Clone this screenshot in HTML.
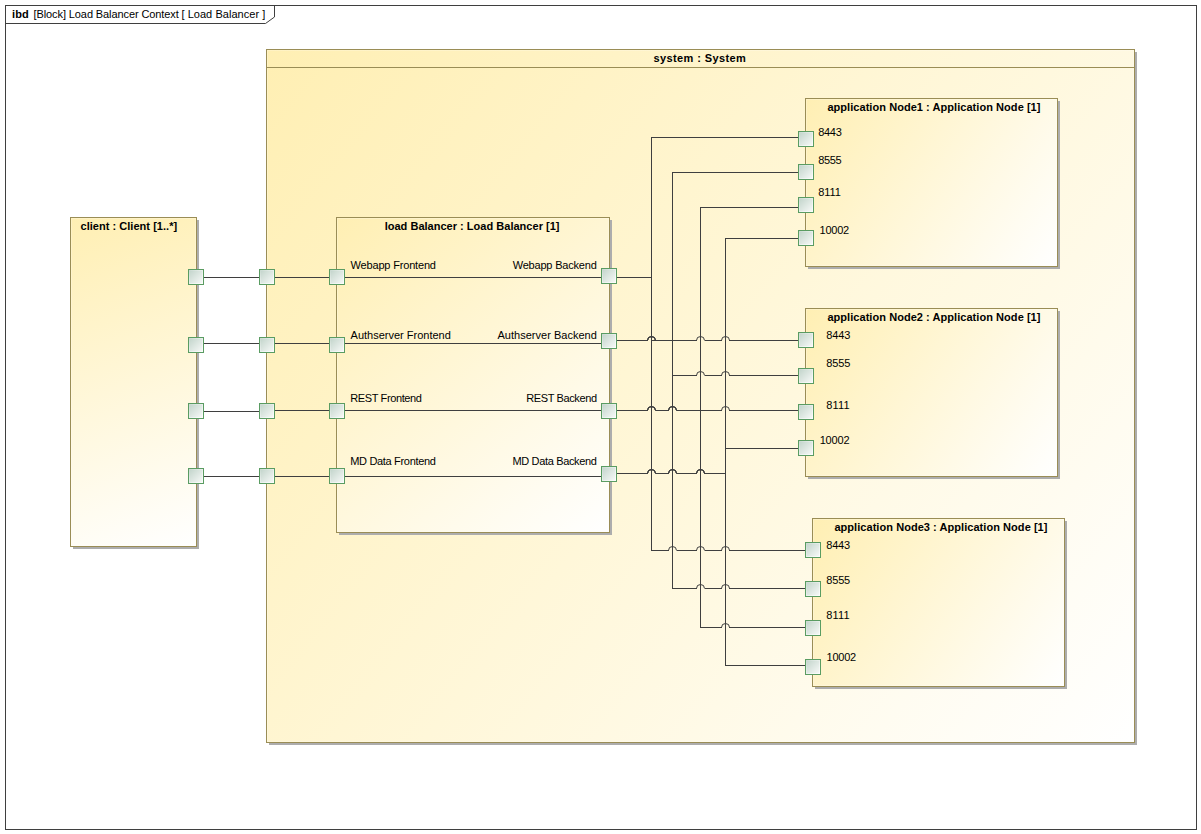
<!DOCTYPE html>
<html><head><meta charset="utf-8"><title>ibd Load Balancer Context</title>
<style>
html,body{margin:0;padding:0;background:#fff;}
body{width:1201px;height:834px;overflow:hidden;}
svg{display:block;font-family:"Liberation Sans",sans-serif;font-size:11px;fill:#000;}
svg rect, svg path{shape-rendering:crispEdges;}
svg path.aa{shape-rendering:auto;}
</style></head><body>
<svg width="1201" height="834" viewBox="0 0 1201 834">
<defs>
<linearGradient id="gph" x1="0" y1="0" x2="1" y2="1"><stop offset="0" stop-color="#fff" stop-opacity="0.12"/><stop offset="1" stop-color="#fff" stop-opacity="0.6"/></linearGradient>
<linearGradient id="gp" x1="0" y1="0" x2="1" y2="1"><stop offset="0" stop-color="#bfd2c8"/><stop offset="1" stop-color="#fbfcfb"/></linearGradient>
<linearGradient id="gc" gradientUnits="userSpaceOnUse" x1="70" y1="217" x2="196" y2="546"><stop offset="0" stop-color="#ffefb3"/><stop offset="1" stop-color="#ffffff"/></linearGradient>
<linearGradient id="gs" gradientUnits="userSpaceOnUse" x1="266" y1="49" x2="1134" y2="742"><stop offset="0" stop-color="#ffefb3"/><stop offset="1" stop-color="#ffffff"/></linearGradient>
<linearGradient id="gl" gradientUnits="userSpaceOnUse" x1="336" y1="217" x2="609" y2="532"><stop offset="0" stop-color="#ffefb3"/><stop offset="1" stop-color="#ffffff"/></linearGradient>
<linearGradient id="gn1" gradientUnits="userSpaceOnUse" x1="805" y1="98" x2="1057" y2="266"><stop offset="0" stop-color="#ffefb3"/><stop offset="1" stop-color="#ffffff"/></linearGradient>
<linearGradient id="gn2" gradientUnits="userSpaceOnUse" x1="805" y1="308" x2="1057" y2="476"><stop offset="0" stop-color="#ffefb3"/><stop offset="1" stop-color="#ffffff"/></linearGradient>
<linearGradient id="gn3" gradientUnits="userSpaceOnUse" x1="812" y1="518" x2="1064" y2="686"><stop offset="0" stop-color="#ffefb3"/><stop offset="1" stop-color="#ffffff"/></linearGradient>
</defs>
<rect x="5.5" y="5.5" width="1191" height="824" fill="#ffffff" stroke="#3f3f3f"/>
<path d="M5.5 23.5 H265.5 L274.5 17 V5.5" fill="none" stroke="#3f3f3f" class="aa"/>
<rect x="73" y="220" width="126" height="329" fill="#adadad"/>
<rect x="70.5" y="217.5" width="126" height="329" fill="url(#gc)" stroke="#9a8d56"/>
<rect x="71.5" y="218.5" width="124" height="327" fill="none" stroke="#ffffff" stroke-opacity="0.22"/>
<rect x="269" y="52" width="868" height="693" fill="#adadad"/>
<rect x="266.5" y="49.5" width="868" height="693" fill="url(#gs)" stroke="#9a8d56"/>
<rect x="267.5" y="50.5" width="866" height="691" fill="none" stroke="#ffffff" stroke-opacity="0.22"/>
<rect x="266" y="67" width="868" height="1" fill="#9a8d56"/>
<rect x="339" y="220" width="273" height="315" fill="#adadad"/>
<rect x="336.5" y="217.5" width="273" height="315" fill="url(#gl)" stroke="#9a8d56"/>
<rect x="337.5" y="218.5" width="271" height="313" fill="none" stroke="#ffffff" stroke-opacity="0.22"/>
<rect x="808" y="101" width="252" height="168" fill="#adadad"/>
<rect x="805.5" y="98.5" width="252" height="168" fill="url(#gn1)" stroke="#9a8d56"/>
<rect x="806.5" y="99.5" width="250" height="166" fill="none" stroke="#ffffff" stroke-opacity="0.22"/>
<rect x="808" y="311" width="252" height="168" fill="#adadad"/>
<rect x="805.5" y="308.5" width="252" height="168" fill="url(#gn2)" stroke="#9a8d56"/>
<rect x="806.5" y="309.5" width="250" height="166" fill="none" stroke="#ffffff" stroke-opacity="0.22"/>
<rect x="815" y="521" width="252" height="168" fill="#adadad"/>
<rect x="812.5" y="518.5" width="252" height="168" fill="url(#gn3)" stroke="#9a8d56"/>
<rect x="813.5" y="519.5" width="250" height="166" fill="none" stroke="#ffffff" stroke-opacity="0.22"/>
<rect x="204" y="277" width="55" height="1" fill="#3f3f3f"/>
<rect x="275" y="277" width="54" height="1" fill="#3f3f3f"/>
<rect x="345" y="277" width="256" height="1" fill="#3f3f3f"/>
<rect x="204" y="343" width="55" height="1" fill="#3f3f3f"/>
<rect x="275" y="343" width="54" height="1" fill="#3f3f3f"/>
<rect x="345" y="343" width="256" height="1" fill="#3f3f3f"/>
<rect x="204" y="411" width="55" height="1" fill="#3f3f3f"/>
<rect x="275" y="410" width="54" height="1" fill="#3f3f3f"/>
<rect x="345" y="410" width="256" height="1" fill="#3f3f3f"/>
<rect x="204" y="476" width="55" height="1" fill="#3f3f3f"/>
<rect x="275" y="476" width="54" height="1" fill="#3f3f3f"/>
<rect x="345" y="476" width="256" height="1" fill="#3f3f3f"/>
<rect x="651" y="137" width="1" height="414" fill="#3f3f3f"/>
<rect x="672" y="172" width="1" height="417" fill="#3f3f3f"/>
<rect x="700" y="207" width="1" height="421" fill="#3f3f3f"/>
<rect x="725" y="238" width="1" height="428" fill="#3f3f3f"/>
<rect x="651" y="137" width="147" height="1" fill="#3f3f3f"/>
<rect x="672" y="172" width="126" height="1" fill="#3f3f3f"/>
<rect x="700" y="207" width="98" height="1" fill="#3f3f3f"/>
<rect x="725" y="238" width="73" height="1" fill="#3f3f3f"/>
<rect x="617" y="277" width="34" height="1" fill="#3f3f3f"/>
<rect x="617" y="340" width="31" height="1" fill="#3f3f3f"/>
<path d="M647.5 340.5 A4 4 0 0 1 655.5 340.5" fill="none" stroke="#3f3f3f" stroke-width="1" class="aa"/>
<path d="M647.5 340.5 A4 4 0 0 1 655.5 340.5" fill="none" stroke="#3f3f3f" stroke-width="1" class="aa"/>
<path d="M647.5 340.5 A4 4 0 0 1 655.5 340.5" fill="none" stroke="#3f3f3f" stroke-width="1" class="aa"/>
<rect x="656" y="340" width="41" height="1" fill="#3f3f3f"/>
<path d="M696.5 340.5 A4 4 0 0 1 704.5 340.5" fill="none" stroke="#3f3f3f" stroke-width="1" class="aa"/>
<rect x="705" y="340" width="17" height="1" fill="#3f3f3f"/>
<path d="M721.5 340.5 A4 4 0 0 1 729.5 340.5" fill="none" stroke="#3f3f3f" stroke-width="1" class="aa"/>
<rect x="729" y="340" width="69" height="1" fill="#3f3f3f"/>
<rect x="651" y="340" width="5" height="1" fill="#3f3f3f"/>
<rect x="672" y="375" width="25" height="1" fill="#3f3f3f"/>
<path d="M696.5 375.5 A4 4 0 0 1 704.5 375.5" fill="none" stroke="#3f3f3f" stroke-width="1" class="aa"/>
<rect x="705" y="375" width="17" height="1" fill="#3f3f3f"/>
<path d="M721.5 375.5 A4 4 0 0 1 729.5 375.5" fill="none" stroke="#3f3f3f" stroke-width="1" class="aa"/>
<rect x="729" y="375" width="69" height="1" fill="#3f3f3f"/>
<rect x="617" y="410" width="31" height="1" fill="#3f3f3f"/>
<path d="M647.5 410.5 A4 4 0 0 1 655.5 410.5" fill="none" stroke="#3f3f3f" stroke-width="1" class="aa"/>
<path d="M647.5 410.5 A4 4 0 0 1 655.5 410.5" fill="none" stroke="#3f3f3f" stroke-width="1" class="aa"/>
<path d="M647.5 410.5 A4 4 0 0 1 655.5 410.5" fill="none" stroke="#3f3f3f" stroke-width="1" class="aa"/>
<rect x="656" y="410" width="13" height="1" fill="#3f3f3f"/>
<path d="M668.5 410.5 A4 4 0 0 1 676.5 410.5" fill="none" stroke="#3f3f3f" stroke-width="1" class="aa"/>
<path d="M668.5 410.5 A4 4 0 0 1 676.5 410.5" fill="none" stroke="#3f3f3f" stroke-width="1" class="aa"/>
<path d="M668.5 410.5 A4 4 0 0 1 676.5 410.5" fill="none" stroke="#3f3f3f" stroke-width="1" class="aa"/>
<rect x="677" y="410" width="45" height="1" fill="#3f3f3f"/>
<path d="M721.5 410.5 A4 4 0 0 1 729.5 410.5" fill="none" stroke="#3f3f3f" stroke-width="1" class="aa"/>
<rect x="729" y="410" width="69" height="1" fill="#3f3f3f"/>
<rect x="725" y="448" width="73" height="1" fill="#3f3f3f"/>
<rect x="617" y="473" width="31" height="1" fill="#3f3f3f"/>
<path d="M647.5 473.5 A4 4 0 0 1 655.5 473.5" fill="none" stroke="#3f3f3f" stroke-width="1" class="aa"/>
<path d="M647.5 473.5 A4 4 0 0 1 655.5 473.5" fill="none" stroke="#3f3f3f" stroke-width="1" class="aa"/>
<path d="M647.5 473.5 A4 4 0 0 1 655.5 473.5" fill="none" stroke="#3f3f3f" stroke-width="1" class="aa"/>
<rect x="656" y="473" width="13" height="1" fill="#3f3f3f"/>
<path d="M668.5 473.5 A4 4 0 0 1 676.5 473.5" fill="none" stroke="#3f3f3f" stroke-width="1" class="aa"/>
<path d="M668.5 473.5 A4 4 0 0 1 676.5 473.5" fill="none" stroke="#3f3f3f" stroke-width="1" class="aa"/>
<path d="M668.5 473.5 A4 4 0 0 1 676.5 473.5" fill="none" stroke="#3f3f3f" stroke-width="1" class="aa"/>
<rect x="677" y="473" width="20" height="1" fill="#3f3f3f"/>
<path d="M696.5 473.5 A4 4 0 0 1 704.5 473.5" fill="none" stroke="#3f3f3f" stroke-width="1" class="aa"/>
<path d="M696.5 473.5 A4 4 0 0 1 704.5 473.5" fill="none" stroke="#3f3f3f" stroke-width="1" class="aa"/>
<path d="M696.5 473.5 A4 4 0 0 1 704.5 473.5" fill="none" stroke="#3f3f3f" stroke-width="1" class="aa"/>
<rect x="704" y="473" width="21" height="1" fill="#3f3f3f"/>
<rect x="651" y="550" width="18" height="1" fill="#3f3f3f"/>
<path d="M668.5 550.5 A4 4 0 0 1 676.5 550.5" fill="none" stroke="#3f3f3f" stroke-width="1" class="aa"/>
<rect x="677" y="550" width="20" height="1" fill="#3f3f3f"/>
<path d="M696.5 550.5 A4 4 0 0 1 704.5 550.5" fill="none" stroke="#3f3f3f" stroke-width="1" class="aa"/>
<rect x="705" y="550" width="17" height="1" fill="#3f3f3f"/>
<path d="M721.5 550.5 A4 4 0 0 1 729.5 550.5" fill="none" stroke="#3f3f3f" stroke-width="1" class="aa"/>
<rect x="729" y="550" width="76" height="1" fill="#3f3f3f"/>
<rect x="672" y="588" width="25" height="1" fill="#3f3f3f"/>
<path d="M696.5 588.5 A4 4 0 0 1 704.5 588.5" fill="none" stroke="#3f3f3f" stroke-width="1" class="aa"/>
<rect x="705" y="588" width="17" height="1" fill="#3f3f3f"/>
<path d="M721.5 588.5 A4 4 0 0 1 729.5 588.5" fill="none" stroke="#3f3f3f" stroke-width="1" class="aa"/>
<rect x="729" y="588" width="76" height="1" fill="#3f3f3f"/>
<rect x="700" y="627" width="22" height="1" fill="#3f3f3f"/>
<path d="M721.5 627.5 A4 4 0 0 1 729.5 627.5" fill="none" stroke="#3f3f3f" stroke-width="1" class="aa"/>
<rect x="729" y="627" width="76" height="1" fill="#3f3f3f"/>
<rect x="725" y="665" width="80" height="1" fill="#3f3f3f"/>
<rect x="188.5" y="269.5" width="15" height="15" fill="url(#gp)" stroke="#5a9c62"/>
<rect x="189.5" y="270.5" width="13" height="13" fill="none" stroke="url(#gph)"/>
<rect x="259.5" y="269.5" width="15" height="15" fill="url(#gp)" stroke="#5a9c62"/>
<rect x="260.5" y="270.5" width="13" height="13" fill="none" stroke="url(#gph)"/>
<rect x="329.5" y="269.5" width="15" height="15" fill="url(#gp)" stroke="#5a9c62"/>
<rect x="330.5" y="270.5" width="13" height="13" fill="none" stroke="url(#gph)"/>
<rect x="188.5" y="337.5" width="15" height="15" fill="url(#gp)" stroke="#5a9c62"/>
<rect x="189.5" y="338.5" width="13" height="13" fill="none" stroke="url(#gph)"/>
<rect x="259.5" y="337.5" width="15" height="15" fill="url(#gp)" stroke="#5a9c62"/>
<rect x="260.5" y="338.5" width="13" height="13" fill="none" stroke="url(#gph)"/>
<rect x="329.5" y="337.5" width="15" height="15" fill="url(#gp)" stroke="#5a9c62"/>
<rect x="330.5" y="338.5" width="13" height="13" fill="none" stroke="url(#gph)"/>
<rect x="188.5" y="403.5" width="15" height="15" fill="url(#gp)" stroke="#5a9c62"/>
<rect x="189.5" y="404.5" width="13" height="13" fill="none" stroke="url(#gph)"/>
<rect x="259.5" y="403.5" width="15" height="15" fill="url(#gp)" stroke="#5a9c62"/>
<rect x="260.5" y="404.5" width="13" height="13" fill="none" stroke="url(#gph)"/>
<rect x="329.5" y="403.5" width="15" height="15" fill="url(#gp)" stroke="#5a9c62"/>
<rect x="330.5" y="404.5" width="13" height="13" fill="none" stroke="url(#gph)"/>
<rect x="188.5" y="468.5" width="15" height="15" fill="url(#gp)" stroke="#5a9c62"/>
<rect x="189.5" y="469.5" width="13" height="13" fill="none" stroke="url(#gph)"/>
<rect x="259.5" y="468.5" width="15" height="15" fill="url(#gp)" stroke="#5a9c62"/>
<rect x="260.5" y="469.5" width="13" height="13" fill="none" stroke="url(#gph)"/>
<rect x="329.5" y="468.5" width="15" height="15" fill="url(#gp)" stroke="#5a9c62"/>
<rect x="330.5" y="469.5" width="13" height="13" fill="none" stroke="url(#gph)"/>
<rect x="601.5" y="268.5" width="15" height="15" fill="url(#gp)" stroke="#5a9c62"/>
<rect x="602.5" y="269.5" width="13" height="13" fill="none" stroke="url(#gph)"/>
<rect x="601.5" y="333.5" width="15" height="15" fill="url(#gp)" stroke="#5a9c62"/>
<rect x="602.5" y="334.5" width="13" height="13" fill="none" stroke="url(#gph)"/>
<rect x="601.5" y="403.5" width="15" height="15" fill="url(#gp)" stroke="#5a9c62"/>
<rect x="602.5" y="404.5" width="13" height="13" fill="none" stroke="url(#gph)"/>
<rect x="601.5" y="466.5" width="15" height="15" fill="url(#gp)" stroke="#5a9c62"/>
<rect x="602.5" y="467.5" width="13" height="13" fill="none" stroke="url(#gph)"/>
<rect x="798.5" y="131.5" width="15" height="15" fill="url(#gp)" stroke="#5a9c62"/>
<rect x="799.5" y="132.5" width="13" height="13" fill="none" stroke="url(#gph)"/>
<rect x="798.5" y="164.5" width="15" height="15" fill="url(#gp)" stroke="#5a9c62"/>
<rect x="799.5" y="165.5" width="13" height="13" fill="none" stroke="url(#gph)"/>
<rect x="798.5" y="197.5" width="15" height="15" fill="url(#gp)" stroke="#5a9c62"/>
<rect x="799.5" y="198.5" width="13" height="13" fill="none" stroke="url(#gph)"/>
<rect x="798.5" y="230.5" width="15" height="15" fill="url(#gp)" stroke="#5a9c62"/>
<rect x="799.5" y="231.5" width="13" height="13" fill="none" stroke="url(#gph)"/>
<rect x="798.5" y="332.5" width="15" height="15" fill="url(#gp)" stroke="#5a9c62"/>
<rect x="799.5" y="333.5" width="13" height="13" fill="none" stroke="url(#gph)"/>
<rect x="798.5" y="368.5" width="15" height="15" fill="url(#gp)" stroke="#5a9c62"/>
<rect x="799.5" y="369.5" width="13" height="13" fill="none" stroke="url(#gph)"/>
<rect x="798.5" y="404.5" width="15" height="15" fill="url(#gp)" stroke="#5a9c62"/>
<rect x="799.5" y="405.5" width="13" height="13" fill="none" stroke="url(#gph)"/>
<rect x="798.5" y="440.5" width="15" height="15" fill="url(#gp)" stroke="#5a9c62"/>
<rect x="799.5" y="441.5" width="13" height="13" fill="none" stroke="url(#gph)"/>
<rect x="805.5" y="542.5" width="15" height="15" fill="url(#gp)" stroke="#5a9c62"/>
<rect x="806.5" y="543.5" width="13" height="13" fill="none" stroke="url(#gph)"/>
<rect x="805.5" y="581.5" width="15" height="15" fill="url(#gp)" stroke="#5a9c62"/>
<rect x="806.5" y="582.5" width="13" height="13" fill="none" stroke="url(#gph)"/>
<rect x="805.5" y="620.5" width="15" height="15" fill="url(#gp)" stroke="#5a9c62"/>
<rect x="806.5" y="621.5" width="13" height="13" fill="none" stroke="url(#gph)"/>
<rect x="805.5" y="659.5" width="15" height="15" fill="url(#gp)" stroke="#5a9c62"/>
<rect x="806.5" y="660.5" width="13" height="13" fill="none" stroke="url(#gph)"/>
<text x="11.97" y="18" textLength="16.74" font-weight="bold">ibd</text>
<text x="33.53" y="18" textLength="145.26">[Block] Load Balancer Context</text>
<text x="181.43" y="18" textLength="83.89">[ Load Balancer ]</text>
<text x="80.5" y="230" textLength="96.62" font-weight="bold">client : Client [1..*]</text>
<text x="653.46" y="62" textLength="92.34" font-weight="bold">system : System</text>
<text x="384.67" y="230" textLength="174.81" font-weight="bold">load Balancer : Load Balancer [1]</text>
<text x="827.4" y="111" textLength="213.05" font-weight="bold">application Node1 : Application Node [1]</text>
<text x="827.4" y="321" textLength="213.05" font-weight="bold">application Node2 : Application Node [1]</text>
<text x="834.4" y="531" textLength="213.05" font-weight="bold">application Node3 : Application Node [1]</text>
<text x="350.54" y="269" textLength="85.43">Webapp Frontend</text>
<text x="512.64" y="269" textLength="84.19">Webapp Backend</text>
<text x="350.54" y="339" textLength="100.25">Authserver Frontend</text>
<text x="497.49" y="339" textLength="99.3">Authserver Backend</text>
<text x="350.27" y="402" textLength="71.63">REST Frontend</text>
<text x="526.17" y="402" textLength="70.84">REST Backend</text>
<text x="350.27" y="465" textLength="85.6">MD Data Frontend</text>
<text x="512.47" y="465" textLength="84.42">MD Data Backend</text>
<text x="818.28" y="136" textLength="23.47">8443</text>
<text x="818.28" y="164" textLength="23.43">8555</text>
<text x="818.28" y="196" textLength="22.7">8111</text>
<text x="819.59" y="234" textLength="29.61">10002</text>
<text x="826.18" y="339" textLength="24.24">8443</text>
<text x="826.18" y="367" textLength="24.2">8555</text>
<text x="826.18" y="409" textLength="23.41">8111</text>
<text x="819.69" y="444" textLength="29.81">10002</text>
<text x="826.28" y="549" textLength="23.84">8443</text>
<text x="826.28" y="584" textLength="23.9">8555</text>
<text x="826.28" y="619" textLength="23.34">8111</text>
<text x="826.59" y="661" textLength="29.6">10002</text>
</svg>
</body></html>
